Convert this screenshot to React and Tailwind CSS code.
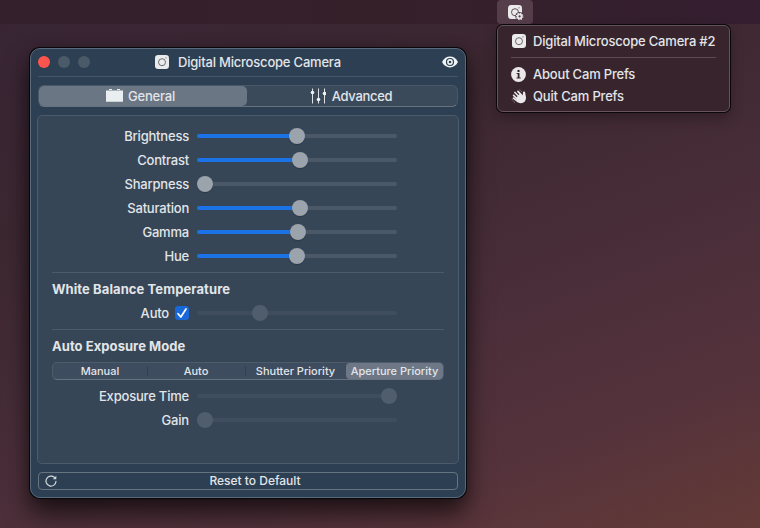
import React from "react";

const CameraIcon = ({ hole, gear = false, className = "" }) => (
  <svg viewBox="0 0 14 14" className={`size-[14px] shrink-0 overflow-visible ${className}`}>
    <rect width="14" height="14" rx="3.2" fill="#ebebeb" />
    <circle cx="7" cy="7.2" r="3.5" fill="none" stroke={hole} strokeWidth="0.9" />
    <circle cx="11" cy="2.8" r="0.6" fill={hole} />
    {gear && (
      <g>
        <circle cx="11.6" cy="11.4" r="4.300" fill={hole} />
        <circle cx="11.6" cy="11.4" r="2" fill="none" stroke="#ebebeb" strokeWidth="1.7" />
        <circle cx="11.6" cy="11.4" r="3.2" fill="none" stroke="#ebebeb" strokeWidth="1.200" strokeDasharray="1.257 1.257" />
      </g>
    )}
  </svg>
);

const EyeIcon = () => (
  <svg viewBox="0 0 16 12" className="h-[12px] w-[16px] shrink-0">
    <path d="M0 6C2 2.300 4.800 0.600 8 0.600S14 2.300 16 6C14 9.700 11.200 11.400 8 11.400S2 9.700 0 6Z" fill="#f1f5f6" />
    <circle cx="8" cy="6" r="4.100" fill="#2d3f52" />
    <circle cx="8" cy="6" r="2.900" fill="#f1f5f6" />
    <circle cx="8" cy="6" r="1.300" fill="#2d3f52" />
  </svg>
);

const BoxIcon = () => (
  <svg viewBox="0 0 17 13" className="h-[13px] w-[17px] shrink-0">
    <path d="M0 1.500H17V12.700H0ZM3 0H6V1H3ZM11 0H14V1H11Z" fill="#e9eff0" />
  </svg>
);

const FadersIcon = () => (
  <svg viewBox="0 0 16 16" className="size-[16px] shrink-0">
    <path d="M2.500 0.500V15.500M8.500 0.500V15.500M14.500 0.500V15.500" stroke="#dbe1e5" strokeWidth="1" />
    <circle cx="2.500" cy="4.500" r="1.800" fill="#eef2f3" />
    <circle cx="8.500" cy="11.500" r="1.800" fill="#eef2f3" />
    <circle cx="14.500" cy="5.500" r="1.800" fill="#eef2f3" />
  </svg>
);

const InfoIcon = () => (
  <svg viewBox="0 0 15 15" className="size-[15px] shrink-0">
    <circle cx="7.500" cy="7.500" r="7.400" fill="#ebe8ea" />
    <circle cx="7.500" cy="3.900" r="1.200" fill="#38242d" />
    <path d="M5.600 6H8.500V10.400H9.700V11.500H5.500V10.400H6.700V7.100H5.600Z" fill="#38242d" />
  </svg>
);

const WaveIcon = () => (
  <svg viewBox="0 0 16 15" className="h-[15px] w-[16px] shrink-0">
    <path d="M2.600 6.300L8.500 12M3.900 3.500L9.500 9M6.900 2.300L11 6.700M2.500 9.200L7 12.700" stroke="#ebe8ea" strokeWidth="1.700" strokeLinecap="round" fill="none" />
    <path d="M5 9L9 4.500L11.800 6.800L12 3.300C12.200 2.200 14 2.400 14.200 3.700L15 8.500C15 12 13 14.200 10 14.200C7.500 14.200 6 12.500 5 9Z" fill="#ebe8ea" />
    <path d="M0.800 10L2 11.500M2.500 12.500L4 13.600M8.200 0.800L9.700 1.300M10.300 2L11 3" stroke="#8b7e87" strokeWidth="0.900" fill="none" />
  </svg>
);

const ResetIcon = () => (
  <svg viewBox="0 0 12 12" className="size-[12px] shrink-0">
    <path d="M11 6.300A5 5 0 1 1 9.300 2.300" fill="none" stroke="#d3d9dd" strokeWidth="1.200" strokeLinecap="round" />
    <path d="M11.300 0.800V4.300H7.800Z" fill="#d3d9dd" />
  </svg>
);

function Slider({ knob, disabled = false, filled = true }) {
  return (
    <div className="relative ml-2 h-4 w-[200px] shrink-0">
      <div className={`mt-[6px] h-1 overflow-hidden rounded-full ${disabled ? "bg-[#3f4d5f]" : "bg-[#4a5867]"}`}>
        {filled && !disabled && <div className="h-full bg-[#1a72e6]" style={{ width: knob }} />}
      </div>
      <div
        className={`absolute top-0 size-4 rounded-full ${disabled ? "bg-[#4f5d6c]" : "bg-[#9ba3ac] shadow-[0_1px_1px_rgba(0,0,0,0.2)]"}`}
        style={{ left: knob - 8 }}
      />
    </div>
  );
}

function Row({ label, children, ...slider }) {
  return (
    <div className="flex h-6 items-center">
      <div className="flex w-[137px] items-center justify-end gap-[6px]">
        <span className="whitespace-nowrap tracking-[-0.2px]">{label}</span>
        {children}
      </div>
      <Slider {...slider} />
    </div>
  );
}

const rows = [
  { label: "Brightness", knob: 100 },
  { label: "Contrast", knob: 103 },
  { label: "Sharpness", knob: 8, filled: false },
  { label: "Saturation", knob: 103 },
  { label: "Gamma", knob: 101 },
  { label: "Hue", knob: 100 },
];

function PrefsWindow() {
  return (
    <section className="ml-[30px] mt-[24px] flex h-[450px] w-[436px] flex-col rounded-[10px] border border-[#596b7b] bg-[#2d3f52] px-[7px] shadow-[0_0_0_1px_#09070a,0_16px_26px_rgba(0,0,0,0.6),0_2px_14px_rgba(0,0,0,0.25)]">
      <header className="flex h-[28px] shrink-0 items-center border-b border-[#45566a] pb-px">
        <span className="size-3 rounded-full bg-[#ff544d]" />
        <span className="ml-2 size-3 rounded-full bg-[#4b5a69]" />
        <span className="ml-2 size-3 rounded-full bg-[#4b5a69]" />
        <CameraIcon hole="#53606c" className="ml-[65px]" />
        <h1 className="ml-[9px] flex-1 whitespace-nowrap tracking-[-0.2px]">Digital Microscope Camera</h1>
        <EyeIcon />
      </header>
      <nav className="mt-2 flex h-[22px] w-[420px] shrink-0 rounded-md border border-[#485869] border-b-[#66737f] bg-[#3a4a5b]">
        <div className="flex h-[20px] w-[208px] items-center justify-center rounded-[5px] bg-[#6b7685] pb-px pr-[5px]">
          <BoxIcon />
          <span className="ml-[5px] tracking-[-0.2px]">General</span>
        </div>
        <div className="flex flex-1 items-center justify-center pb-px pr-[2px]">
          <FadersIcon />
          <span className="ml-[6px] tracking-[-0.3px]">Advanced</span>
        </div>
      </nav>
      <main className="-ml-px mt-2 h-[349px] w-[422px] shrink-0 rounded-[5px] border border-[#4b5b6b] bg-[#364657] px-[14px] pt-2">
        {rows.map((r) => <Row key={r.label} {...r} />)}
        <div className="mt-1 border-t border-[#4b5b6a]" />
        <h2 className="mt-2 h-4 whitespace-nowrap font-bold leading-4 tracking-[0.09px]">White Balance Temperature</h2>
        <div className="mt-1">
          <Row label="Auto" knob={63} disabled>
            <svg viewBox="0 0 14 14" className="size-[14px]">
              <rect width="14" height="14" rx="3.300" fill="#1968da" />
              <path d="M3 7.700L5.800 11L11 3" fill="none" stroke="white" strokeWidth="1.700" strokeLinecap="round" strokeLinejoin="round" />
            </svg>
          </Row>
        </div>
        <div className="mt-1 border-t border-[#4b5b6a]" />
        <h2 className="mt-2 h-4 whitespace-nowrap font-bold leading-4 tracking-[0.06px]">Auto Exposure Mode</h2>
        <div className="mt-2 flex h-[18px] w-[392px] items-center rounded-[5px] border border-[#4d5b6b] border-b-[#66727f] bg-[#3e4c60] text-[11px]">
          <span className="w-[94px] text-center">Manual</span>
          <span className="h-[10px] w-px bg-[#324151]" />
          <span className="w-[97px] pr-px text-center">Auto</span>
          <span className="h-[10px] w-px bg-[#324151]" />
          <span className="w-[100px] whitespace-nowrap pr-px text-center">Shutter Priority</span>
          <span className="flex h-4 w-[97px] items-center justify-center whitespace-nowrap rounded-[4px] bg-[#6d7785]">Aperture Priority</span>
        </div>
        <div className="mt-1">
          <Row label="Exposure Time" knob={192} disabled />
          <Row label="Gain" knob={8} disabled />
        </div>
      </main>
      <button className="mt-2 flex h-[18px] w-[420px] shrink-0 items-center rounded-[4px] border border-[#667482] px-[6px] text-[12px]">
        <ResetIcon />
        <span className="flex-1 pl-[2px] text-center">Reset to Default</span>
      </button>
    </section>
  );
}

function StatusMenu() {
  return (
    <div className="ml-[31px] mt-[1px] h-[87px] w-[233px] rounded-[6px] border border-[#64525c] bg-[#38242d] px-[13px] shadow-[0_0_0_1px_#0c070a,0_6px_14px_rgba(0,0,0,0.3)]">
      <div className="mt-[4px] flex h-[22px] items-center">
        <CameraIcon hole="#665860" className="ml-px" />
        <span className="ml-[7px] whitespace-nowrap tracking-[-0.19px]">Digital Microscope Camera #2</span>
      </div>
      <div className="mb-[5px] mt-[5px] w-[205px] border-t border-[#5d4a54]" />
      <div className="flex h-[22px] items-center"><InfoIcon /><span className="ml-[7px] tracking-[-0.2px]">About Cam Prefs</span></div>
      <div className="flex h-[22px] items-center"><WaveIcon /><span className="ml-[6px] tracking-[-0.17px]">Quit Cam Prefs</span></div>
    </div>
  );
}

export default function App() {
  return (
    <div className="h-[528px] w-[760px] overflow-hidden bg-[linear-gradient(160deg,#382535_0%,#3c2731_30%,#472d38_55%,#54323c_80%,#633a36_100%)] font-['Inter','Liberation_Sans',sans-serif] text-[13px] font-medium leading-4 text-[#e2e5e8]">
      <div className="flex h-6 bg-gradient-to-r from-[#341f2d] via-[#35202a] to-[#341e30] pl-[497px]">
        <div className="flex h-6 w-9 items-center justify-center rounded-[4px] bg-[#553d4a]">
          <CameraIcon hole="#553d4a" gear />
        </div>
      </div>
      <div className="flex items-start">
        <PrefsWindow />
        <StatusMenu />
      </div>
    </div>
  );
}
